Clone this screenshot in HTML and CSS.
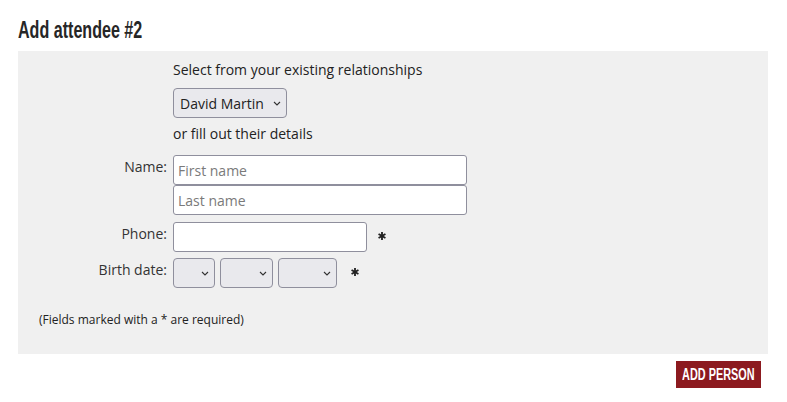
FILE: index.html
```html
<!DOCTYPE html>
<html>
<head>
<meta charset="utf-8">
<link rel="stylesheet" href="styles.css">
</head>
<body>
<div class="page">
  <h2 class="title"><span class="cond">Add attendee #2</span></h2>
  <div class="panel">
    <div class="row">
      <span class="label"></span>
      <div class="field text">Select from your existing relationships</div>
    </div>
    <div class="row gap-sel">
      <span class="label"></span>
      <div class="field"><select class="sel rel"><option>David Martin</option></select></div>
    </div>
    <div class="row gap-or">
      <span class="label"></span>
      <div class="field text">or fill out their details</div>
    </div>
    <div class="row gap-name">
      <span class="label">Name:</span>
      <div class="field stack">
        <input class="inp wide" placeholder="First name">
        <input class="inp wide" placeholder="Last name">
      </div>
    </div>
    <div class="row gap-phone">
      <span class="label">Phone:</span>
      <div class="field inline">
        <input class="inp phone">
        <svg class="req req-phone" width="8" height="8" viewBox="0 0 10 10"><g stroke="#222" stroke-width="2.3"><line x1="5" y1="0" x2="5" y2="10"/><line x1="0.7" y1="2.5" x2="9.3" y2="7.5"/><line x1="0.7" y1="7.5" x2="9.3" y2="2.5"/></g></svg>
      </div>
    </div>
    <div class="row gap-birth">
      <span class="label">Birth date:</span>
      <div class="field inline">
        <select class="sel day"><option></option></select>
        <select class="sel month"><option></option></select>
        <select class="sel year"><option></option></select>
        <svg class="req req-birth" width="8" height="8" viewBox="0 0 10 10"><g stroke="#222" stroke-width="2.3"><line x1="5" y1="0" x2="5" y2="10"/><line x1="0.7" y1="2.5" x2="9.3" y2="7.5"/><line x1="0.7" y1="7.5" x2="9.3" y2="2.5"/></g></svg>
      </div>
    </div>
    <p class="note">(Fields marked with a * are required)</p>
  </div>
  <div class="actions">
    <button class="btn"><span class="btn-text">ADD PERSON</span></button>
  </div>
</div>
</body>
</html>
```
FILE: styles.css
```css
* { box-sizing: border-box; }
html, body { margin: 0; padding: 0; background: #fff; }
body {
  font-family: "Open Sans", "Liberation Sans", sans-serif;
  font-size: 14px;
  color: #222;
}
.page { padding: 0 19px 0 18px; }
.title {
  margin: 0;
  padding-top: 17px;
  height: 51px;
  font-family: "Liberation Sans", "Arial", sans-serif;
  font-weight: bold;
  font-size: 24px;
  line-height: 26px;
  color: #262626;
  white-space: nowrap;
}
.cond {
  display: inline-block;
  transform: scaleX(0.67);
  transform-origin: left center;
}
.panel {
  background: #f0f0f0;
  height: 303px;
  padding-top: 9px;
  display: flex;
  flex-direction: column;
}
.row {
  display: grid;
  grid-template-columns: 149px 1fr;
  column-gap: 6px;
  align-items: start;
}
.label {
  text-align: right;
  color: #333;
  line-height: 20px;
  padding-top: 2px;
}
.text { line-height: 20px; }
.gap-sel { margin-top: 8px; }
.gap-or { margin-top: 6px; }
.gap-name { margin-top: 11px; }
.gap-phone { margin-top: 7px; }
.gap-birth { margin-top: 6px; }
.stack { display: flex; flex-direction: column; gap: 0; }
.inline { display: flex; align-items: center; gap: 5px; }
.inp {
  height: 30px;
  border: 1px solid #8f8f9d;
  border-radius: 3px;
  background: #fff;
  font-family: "Open Sans", sans-serif;
  font-size: 14px;
  padding: 0 4px;
  color: #222;
  margin: 0;
}
.inp::placeholder { color: #7a7a7a; }
.wide { width: 294px; }
.phone { width: 194px; }
.sel {
  -webkit-appearance: none;
  appearance: none;
  height: 30px;
  border: 1px solid #8f8f9d;
  border-radius: 4px;
  background-color: #e9e9ed;
  background-image: url("data:image/svg+xml,%3Csvg xmlns='http://www.w3.org/2000/svg' width='8' height='5' viewBox='0 0 8 5'%3E%3Cpath d='M1 1l3 3 3-3' fill='none' stroke='%23333' stroke-width='1.1'/%3E%3C/svg%3E");
  background-repeat: no-repeat;
  background-position: right 5px center;
  font-family: "Open Sans", sans-serif;
  font-size: 14px;
  color: #222;
  margin: 0;
  padding: 0 18px 0 6px;
}
.rel { width: 114px; }
.day { width: 42px; }
.month { width: 53px; }
.year { width: 59px; }
.req { flex: none; margin-bottom: 3px; }
.req-phone { margin-left: 6px; }
.req-birth { margin-left: 9px; }
.note {
  margin: 24px 0 0 21px;
  font-size: 12px;
  line-height: 16px;
  color: #222;
}
.actions {
  display: flex;
  justify-content: flex-end;
  padding-top: 7px;
  padding-right: 7px;
}
.btn {
  background: #8c1a1f;
  color: #fff;
  border: 0;
  border-radius: 0;
  width: 85px;
  height: 27px;
  padding: 0;
  font-family: "Liberation Sans", "Arial", sans-serif;
  font-weight: bold;
  font-size: 16px;
  white-space: nowrap;
  display: flex;
  align-items: center;
  justify-content: center;
}
.btn-text {
  display: inline-block;
  transform: scaleX(0.68);
}
```
